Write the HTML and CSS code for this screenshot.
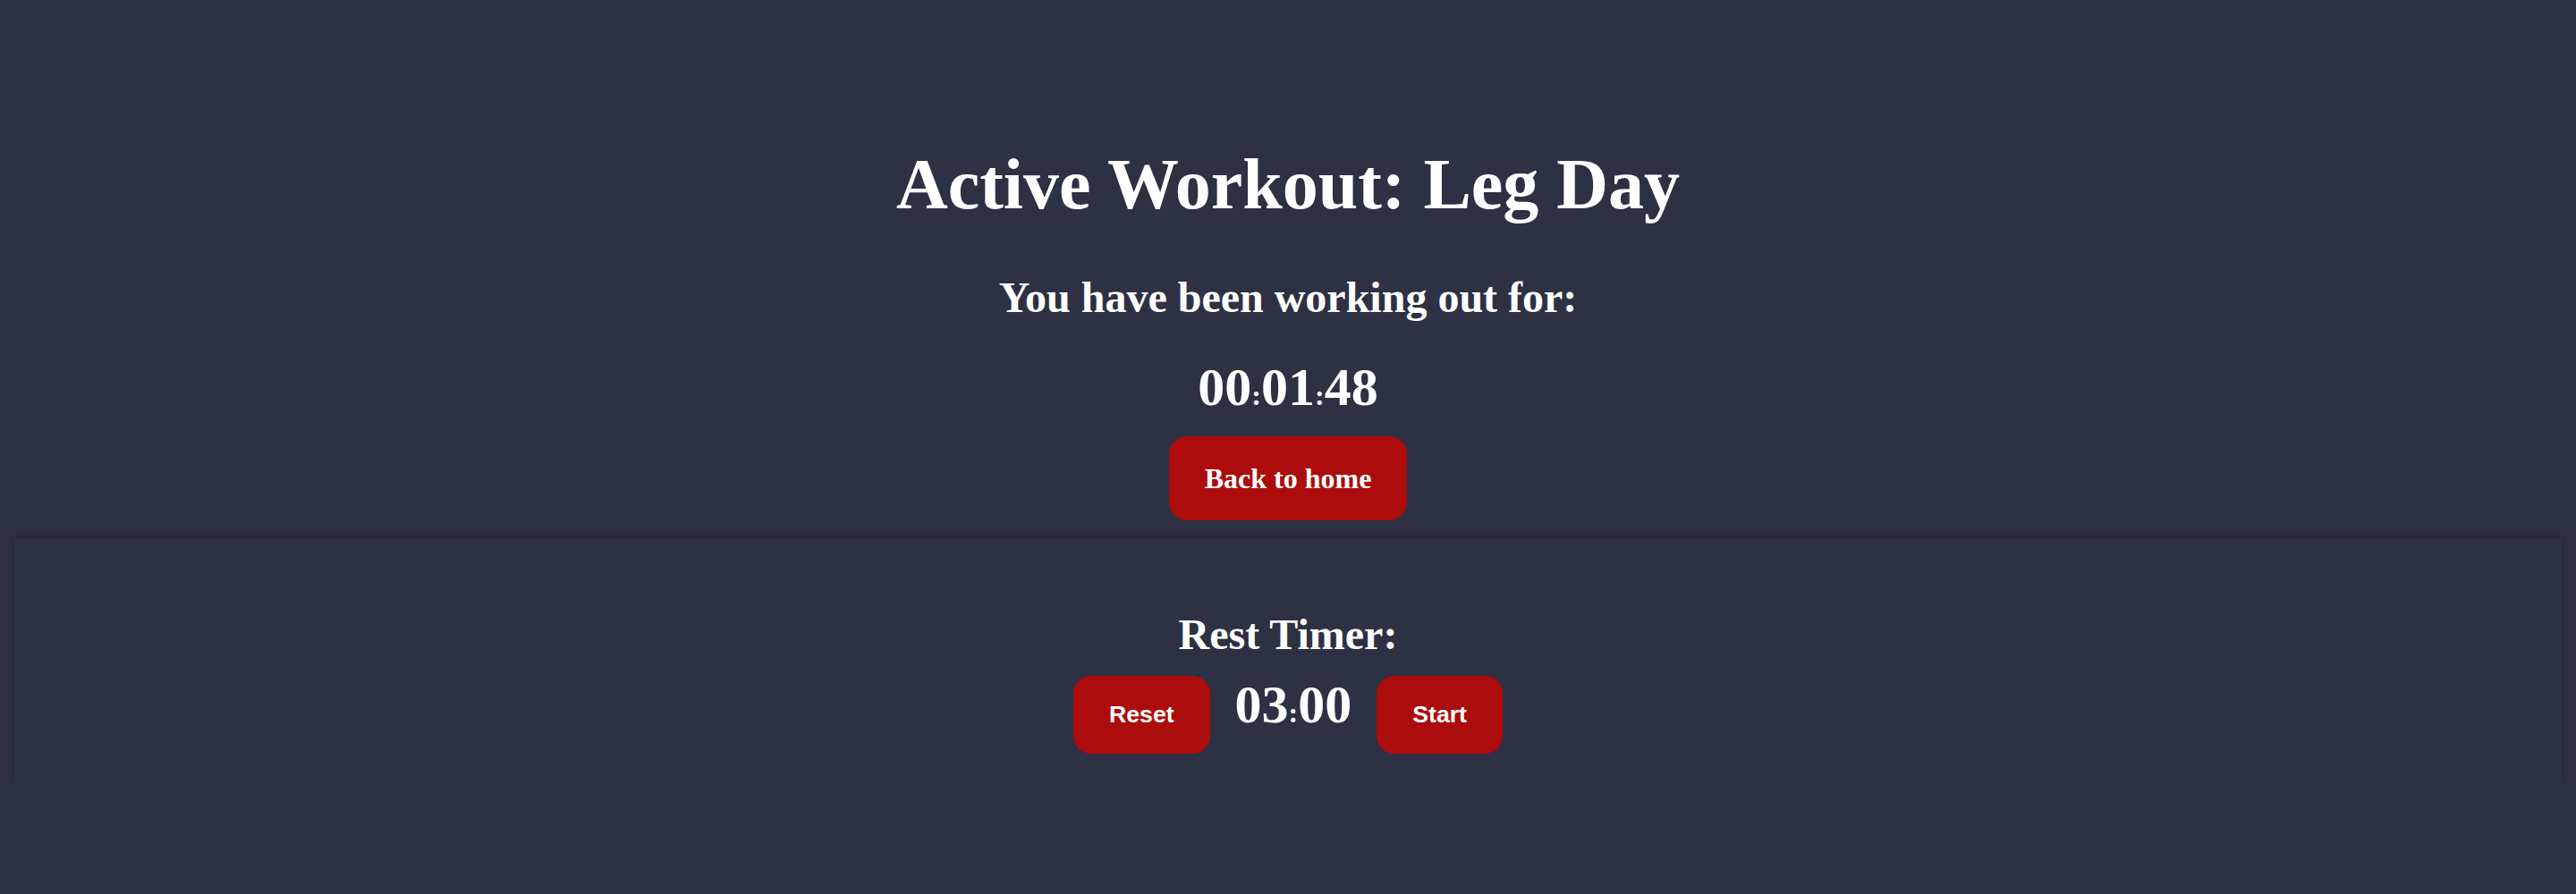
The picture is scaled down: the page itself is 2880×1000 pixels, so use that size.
FILE: index.html
```html
<!DOCTYPE html>
<html lang="en">
<head>
<meta charset="utf-8">
<title>Active Workout</title>
<link rel="stylesheet" href="styles.css">
</head>
<body>
<main class="page">
  <section class="workout">
    <h1 class="title">Active Workout: Leg Day</h1>
    <h2 class="subtitle">You have been working out for:</h2>
    <div class="clock">
      <span class="digits">00</span><span class="sep">:</span><span class="digits">01</span><span class="sep">:</span><span class="digits">48</span>
    </div>
    <a class="btn-home" href="#">Back to home</a>
  </section>
  <section class="rest-panel">
    <h2 class="rest-title">Rest Timer:</h2>
    <div class="rest-row">
      <button class="btn-small" type="button">Reset</button>
      <div class="clock rest-clock">
        <span class="digits">03</span><span class="sep">:</span><span class="digits">00</span>
      </div>
      <button class="btn-small" type="button">Start</button>
    </div>
  </section>
</main>
</body>
</html>
```

FILE: styles.css
```css
html, body {
  margin: 0;
  padding: 0;
  background: #2e3044;
  color: #ffffff;
  font-family: "Liberation Serif", "Times New Roman", serif;
}

.page {
  padding: 0 16px;
  min-height: 1000px;
  box-sizing: border-box;
}

.workout {
  display: flex;
  flex-direction: column;
  align-items: center;
  padding-top: 162px;
}

.title {
  margin: 0;
  font-size: 80px;
  font-weight: bold;
  line-height: 1.107;
}

.subtitle {
  margin: 55px 0 0;
  font-size: 48px;
  font-weight: bold;
  line-height: 1.107;
}

.clock {
  display: flex;
  align-items: baseline;
  justify-content: center;
  font-weight: bold;
}

.workout .clock {
  margin-top: 41px;
}

.digits {
  font-size: 60px;
  line-height: 1.107;
}

.sep {
  font-size: 32px;
  line-height: 1.107;
}

.btn-home {
  display: inline-block;
  margin-top: 22px;
  padding: 28px 40px;
  background: #ad0c0c;
  color: #ffffff;
  border-radius: 20px;
  font-family: "Liberation Serif", "Times New Roman", serif;
  font-size: 32px;
  font-weight: bold;
  line-height: 38px;
  text-decoration: none;
}

.rest-panel {
  margin-top: 20px;
  padding: 81px 0 38px;
  display: flex;
  flex-direction: column;
  align-items: center;
  box-shadow: 0 -2px 8px rgba(0, 0, 0, 0.22);
}

.rest-title {
  margin: 0;
  font-size: 48px;
  font-weight: bold;
  line-height: 1.107;
}

.rest-row {
  margin-top: 19px;
  display: flex;
  align-items: baseline;
  justify-content: center;
  gap: 28px;
}

.btn-small {
  margin: 0;
  padding: 28px 40px;
  border: none;
  border-radius: 20px;
  background: #ad0c0c;
  color: #ffffff;
  font-family: "Liberation Sans", Arial, sans-serif;
  font-size: 26.67px;
  font-weight: bold;
  line-height: normal;
  cursor: pointer;
}
```
